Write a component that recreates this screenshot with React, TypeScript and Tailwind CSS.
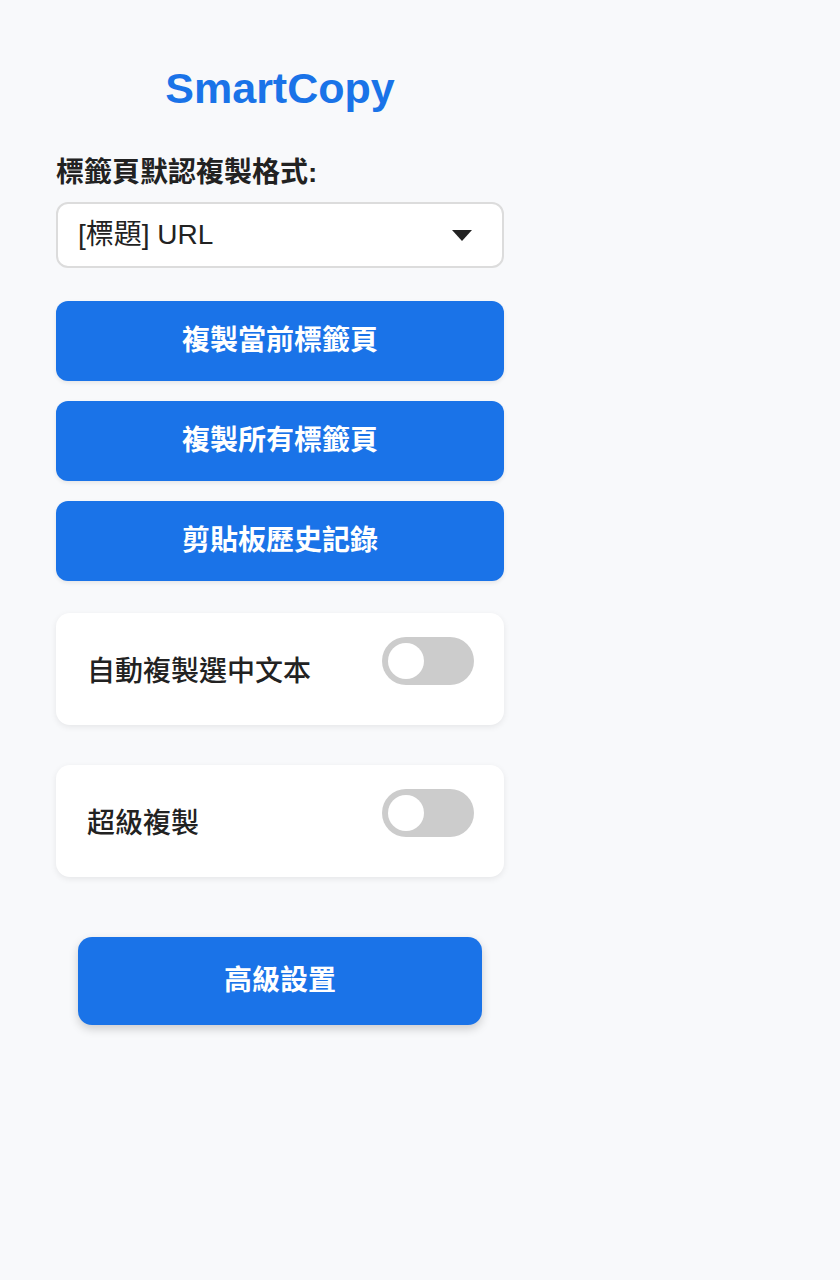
import React from "react";

const font = { fontFamily: '"Liberation Sans", "Noto Sans CJK TC", sans-serif' };

function Toggle() {
  return (
    <div className="pb-4">
      <div className="w-[92px] h-[48px] rounded-full bg-[#cccccc] flex items-center px-[6px]">
        <div className="w-[36px] h-[36px] rounded-full bg-white" />
      </div>
    </div>
  );
}

function Card({ label }: { label: string }) {
  return (
    <div className="h-[112px] bg-white rounded-[14px] shadow-[0_2px_6px_rgba(0,0,0,0.08)] flex items-center justify-between pl-[31px] pr-[30px]">
      <span className="pt-[6px] text-[28px] font-medium text-[#222222] leading-none">{label}</span>
      <Toggle />
    </div>
  );
}

function Btn({ label }: { label: string }) {
  return (
    <div className="h-[80px] rounded-[12px] bg-[#1a73e8] shadow-[0_2px_4px_rgba(0,0,0,0.08)] flex items-center justify-center text-white text-[28px] font-bold leading-none">
      {label}
    </div>
  );
}

export default function App() {
  return (
    <div className="min-h-[1280px] bg-[#f8f9fb]" style={font}>
      <div className="w-[448px] ml-[56px] pt-[62px] flex flex-col">
        <h1 className="text-center text-[43px] font-bold text-[#1a73e8] leading-[52px]">SmartCopy</h1>
        <div className="mt-[45px] text-[28px] font-bold text-[#222222] leading-none">標籤頁默認複製格式:</div>
        <div className="mt-[15px] h-[66px] rounded-[12px] border-2 border-[#dcdcdc] bg-white flex items-center justify-between pl-[20px] pr-[30px]">
          <span className="text-[28px] text-[#222222] leading-none">[標題] URL</span>
          <svg width="20" height="11" viewBox="0 0 20 11"><path d="M0 0 H20 L10 11 Z" fill="#222222" /></svg>
        </div>
        <div className="mt-[33px] flex flex-col gap-[20px]">
          <Btn label="複製當前標籤頁" />
          <Btn label="複製所有標籤頁" />
          <Btn label="剪貼板歷史記錄" />
        </div>
        <div className="mt-[32px] flex flex-col gap-[40px]">
          <Card label="自動複製選中文本" />
          <Card label="超級複製" />
        </div>
        <div className="mt-[60px] mx-[22px] h-[88px] rounded-[14px] bg-[#1a73e8] shadow-[0_4px_10px_rgba(0,0,0,0.18)] flex items-center justify-center text-white text-[28px] font-bold leading-none">
          高級設置
        </div>
      </div>
    </div>
  );
}
